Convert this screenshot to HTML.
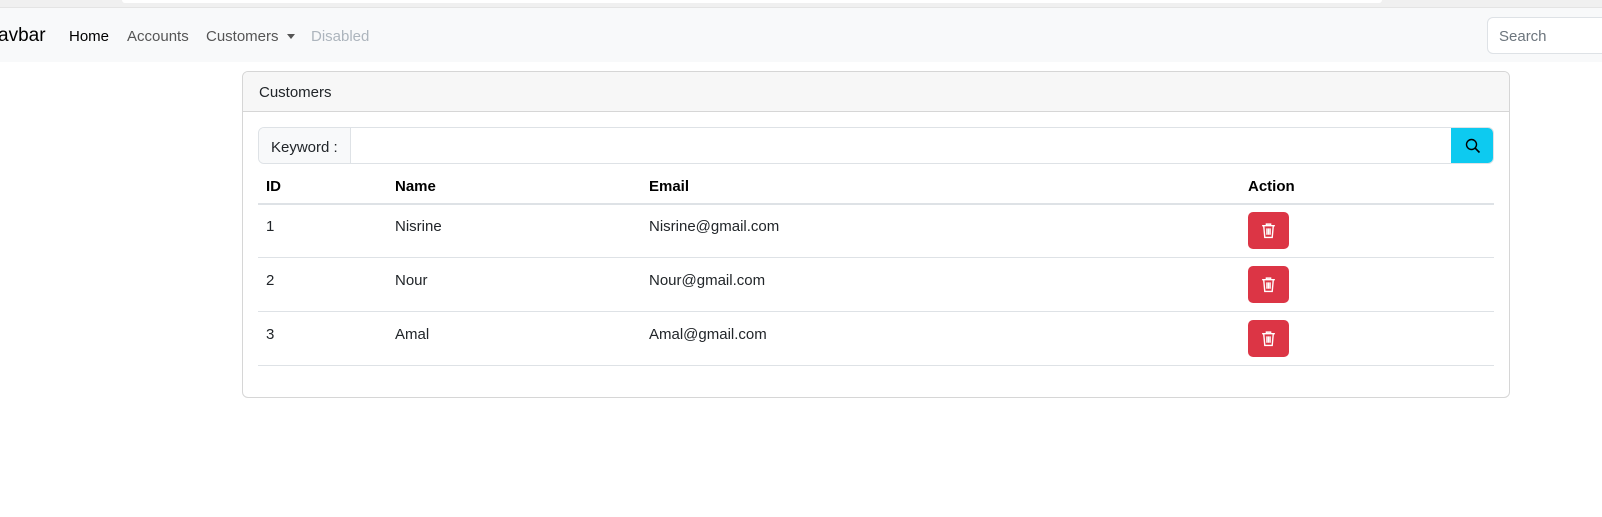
<!DOCTYPE html>
<html><head><style>
*{box-sizing:border-box;margin:0;padding:0}
body{width:1602px;height:517px;background:#fff;font-family:"Liberation Sans",sans-serif;font-size:15px;color:#212529;position:relative;overflow:hidden}
.a{position:absolute;white-space:nowrap}
.th{font-weight:bold;color:#000}
.row{position:absolute;left:258px;width:1236px;height:1px;background:#dee2e6}
.btn{position:absolute;left:1248px;width:41px;height:37px;background:#dc3545;border-radius:5px}
.btn svg{position:absolute;left:12px;top:10px}
</style></head><body>
<div class="a" style="left:0;top:0;width:1602px;height:8px;background:#f0f0f0;border-bottom:1px solid #e4e4e4"></div>
<div class="a" style="left:122px;top:0;width:1260px;height:3px;background:#fff;border-radius:0 0 8px 8px"></div>
<div class="a" style="left:0;top:8px;width:1602px;height:54px;background:#f8f9fa"></div>
<div class="a" style="left:-2px;top:25px;font-size:19px;color:#000">avbar</div>
<div class="a" style="left:69px;top:28px;color:#000">Home</div>
<div class="a" style="left:127px;top:28px;color:#555">Accounts</div>
<div class="a" style="left:206px;top:28px;color:#555">Customers</div>
<div class="a" style="left:287px;top:34px;width:0;height:0;border-left:4px solid transparent;border-right:4px solid transparent;border-top:5px solid #555"></div>
<div class="a" style="left:311px;top:28px;color:#adb5bd">Disabled</div>
<div class="a" style="left:1487px;top:17px;width:130px;height:37px;background:#fff;border:1px solid #dee2e6;border-radius:6px"></div>
<div class="a" style="left:1499px;top:28px;color:#6c757d">Search</div>

<div class="a" style="left:242px;top:71px;width:1268px;height:327px;border:1px solid #d6d6d6;border-radius:6px;overflow:hidden">
<div style="height:40px;background:#f7f7f7;border-bottom:1px solid #d6d6d6"></div>
</div>
<div class="a" style="left:259px;top:84px;color:#212529">Customers</div>

<div class="a" style="left:258px;top:127px;width:1236px;height:37px;border:1px solid #dee2e6;border-radius:6px;overflow:hidden">
<div style="position:absolute;left:0;top:0;width:92px;height:100%;background:#f8f9fa;border-right:1px solid #dee2e6"></div>
<div style="position:absolute;right:0;top:0;width:42px;height:100%;background:#0dcaf0"></div>
</div>
<div class="a" style="left:271px;top:139px">Keyword :</div>
<svg class="a" style="left:1465px;top:138px" width="16" height="16" viewBox="0 0 16 16"><circle cx="6.5" cy="6.5" r="5" fill="none" stroke="#000" stroke-width="1.4"/><path d="M10.2 10.2L14.5 14.5" stroke="#000" stroke-width="1.6"/></svg>

<div class="a th" style="left:266px;top:178px">ID</div>
<div class="a th" style="left:395px;top:178px">Name</div>
<div class="a th" style="left:649px;top:178px">Email</div>
<div class="a th" style="left:1248px;top:178px">Action</div>
<div class="row" style="top:203px;height:2px"></div>

<div class="a" style="left:266px;top:218px">1</div><div class="a" style="left:395px;top:218px">Nisrine</div><div class="a" style="left:649px;top:218px">Nisrine@gmail.com</div>
<div class="btn" style="top:212px"><svg width="17" height="17" viewBox="0 0 16 16"><path d="M2 3.5h12M6 3.5V2h4v1.5M3.5 3.5l1 11h7l1-11M6.5 6v6M8 6v6M9.5 6v6" fill="none" stroke="#fff" stroke-width="1.3"/></svg></div>
<div class="row" style="top:257px"></div>

<div class="a" style="left:266px;top:272px">2</div><div class="a" style="left:395px;top:272px">Nour</div><div class="a" style="left:649px;top:272px">Nour@gmail.com</div>
<div class="btn" style="top:266px"><svg width="17" height="17" viewBox="0 0 16 16"><path d="M2 3.5h12M6 3.5V2h4v1.5M3.5 3.5l1 11h7l1-11M6.5 6v6M8 6v6M9.5 6v6" fill="none" stroke="#fff" stroke-width="1.3"/></svg></div>
<div class="row" style="top:311px"></div>

<div class="a" style="left:266px;top:326px">3</div><div class="a" style="left:395px;top:326px">Amal</div><div class="a" style="left:649px;top:326px">Amal@gmail.com</div>
<div class="btn" style="top:320px"><svg width="17" height="17" viewBox="0 0 16 16"><path d="M2 3.5h12M6 3.5V2h4v1.5M3.5 3.5l1 11h7l1-11M6.5 6v6M8 6v6M9.5 6v6" fill="none" stroke="#fff" stroke-width="1.3"/></svg></div>
<div class="row" style="top:365px"></div>
</body></html>
